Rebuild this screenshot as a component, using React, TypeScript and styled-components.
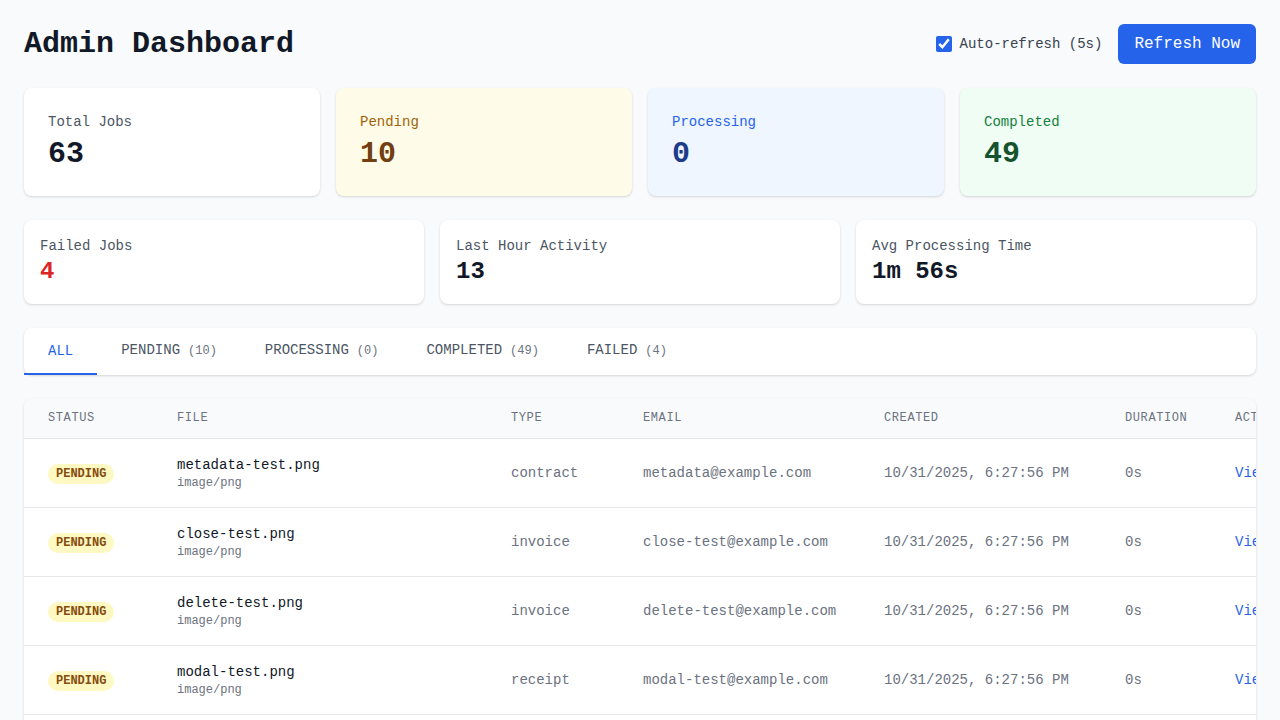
import React, { FC, useState } from 'react'
import styled, { createGlobalStyle } from 'styled-components'

const GlobalStyle = createGlobalStyle`
    body {
        margin: 0;
        background: #f9fafb;
        font-family: "Liberation Mono", "DejaVu Sans Mono", monospace;
        color: #111827;
    }
`

const Page = styled.div`
    padding: 24px;
    display: flex;
    flex-direction: column;
    gap: 24px;
`

const Header = styled.div`
    display: flex;
    align-items: center;
    justify-content: space-between;
`

const Title = styled.h1`
    margin: 0;
    font-size: 30px;
    line-height: 36px;
    font-weight: bold;
    color: #111827;
`

const Controls = styled.div`
    display: flex;
    align-items: center;
    gap: 16px;
`

const AutoLabel = styled.label`
    display: flex;
    align-items: center;
    gap: 8px;
    font-size: 14px;
    color: #374151;
`

const Check = styled.input`
    width: 16px;
    height: 16px;
    margin: 0;
    accent-color: #2563eb;
`

const RefreshButton = styled.button`
    height: 40px;
    padding: 0 16px;
    border: none;
    border-radius: 6px;
    background: #2563eb;
    color: #ffffff;
    font-family: inherit;
    font-size: 16px;
`

const Grid = styled.div<{ $cols: number }>`
    display: grid;
    grid-template-columns: repeat(${(p) => p.$cols}, 1fr);
    gap: 16px;
`

type Tone = 'plain' | 'yellow' | 'blue' | 'green'

const tones: Record<Tone, { bg: string; label: string; value: string }> = {
    plain: { bg: '#ffffff', label: '#4b5563', value: '#111827' },
    yellow: { bg: '#fefce8', label: '#a16207', value: '#713f12' },
    blue: { bg: '#eff6ff', label: '#2563eb', value: '#1e3a8a' },
    green: { bg: '#f0fdf4', label: '#15803d', value: '#14532d' },
}

const Card = styled.div<{ $tone: Tone; $small?: boolean }>`
    background: ${(p) => tones[p.$tone].bg};
    border-radius: 8px;
    box-shadow: 0 1px 3px rgba(0, 0, 0, 0.1), 0 1px 2px rgba(0, 0, 0, 0.06);
    padding: ${(p) => (p.$small ? '16px' : '24px')};
    display: flex;
    flex-direction: column;
    gap: ${(p) => (p.$small ? '0' : '4px')};
`

const CardLabel = styled.span<{ $tone: Tone }>`
    font-size: 14px;
    line-height: 20px;
    color: ${(p) => tones[p.$tone].label};
`

const CardValue = styled.span<{ $color: string; $small?: boolean }>`
    font-size: ${(p) => (p.$small ? '24px' : '30px')};
    line-height: ${(p) => (p.$small ? '32px' : '36px')};
    font-weight: bold;
    color: ${(p) => p.$color};
`

const TabBar = styled.div`
    display: flex;
    background: #ffffff;
    border-radius: 8px;
    box-shadow: 0 1px 3px rgba(0, 0, 0, 0.1), 0 1px 2px rgba(0, 0, 0, 0.06);
`

const Tab = styled.button<{ $active?: boolean }>`
    padding: 12px 24px;
    border: none;
    border-bottom: 2px solid ${(p) => (p.$active ? '#2563eb' : 'transparent')};
    background: none;
    font-family: inherit;
    font-size: 14px;
    line-height: 20px;
    color: ${(p) => (p.$active ? '#2563eb' : '#4b5563')};
`

const Count = styled.span`
    font-size: 12px;
    color: #6b7280;
    margin-left: 8px;
`

const TableCard = styled.div`
    background: #ffffff;
    border-radius: 8px;
    box-shadow: 0 1px 3px rgba(0, 0, 0, 0.1), 0 1px 2px rgba(0, 0, 0, 0.06);
    overflow-x: auto;
`

const Table = styled.table`
    border-collapse: collapse;
    table-layout: fixed;
    width: 1290px;
`

const Th = styled.th<{ $w: number }>`
    width: ${(p) => p.$w - 48}px;
    padding: 12px 24px;
    text-align: left;
    font-size: 12px;
    line-height: 15px;
    font-weight: normal;
    letter-spacing: 0.05em;
    text-transform: uppercase;
    color: #6b7280;
    background: #f9fafb;
    border-bottom: 1px solid #e5e7eb;
    white-space: nowrap;
`

const Td = styled.td`
    padding: 16px 24px;
    font-size: 14px;
    line-height: 20px;
    color: #6b7280;
    border-bottom: 1px solid #e5e7eb;
    white-space: nowrap;
    vertical-align: middle;
    overflow: hidden;
`

const Badge = styled.span`
    display: inline-block;
    padding: 2px 8px;
    border-radius: 9999px;
    background: #fef9c3;
    color: #854d0e;
    font-size: 12px;
    line-height: 16px;
    font-weight: bold;
`

const FileName = styled.div`
    color: #111827;
    font-size: 14px;
    line-height: 20px;
`

const Mime = styled.div`
    color: #6b7280;
    font-size: 12px;
    line-height: 16px;
`

const ViewLink = styled.a`
    color: #2563eb;
    text-decoration: none;
`

const jobs = [
    { file: 'metadata-test.png', type: 'contract', email: 'metadata@example.com' },
    { file: 'close-test.png', type: 'invoice', email: 'close-test@example.com' },
    { file: 'delete-test.png', type: 'invoice', email: 'delete-test@example.com' },
    { file: 'modal-test.png', type: 'receipt', email: 'modal-test@example.com' },
    { file: 'upload-test.png', type: 'receipt', email: 'upload-test@example.com' },
]

const columns: [string, number][] = [
    ['Status', 129],
    ['File', 334],
    ['Type', 132],
    ['Email', 241],
    ['Created', 241],
    ['Duration', 110],
    ['Actions', 103],
]

const tabs: [string, number | null][] = [
    ['ALL', null],
    ['PENDING', 10],
    ['PROCESSING', 0],
    ['COMPLETED', 49],
    ['FAILED', 4],
]

const App: FC = () => {
    const [auto, setAuto] = useState(true)
    return (
        <Page>
            <GlobalStyle />
            <Header>
                <Title>Admin Dashboard</Title>
                <Controls>
                    <AutoLabel>
                        <Check type="checkbox" checked={auto} onChange={() => setAuto(!auto)} />
                        Auto-refresh (5s)
                    </AutoLabel>
                    <RefreshButton>Refresh Now</RefreshButton>
                </Controls>
            </Header>

            <Grid $cols={4}>
                <Card $tone="plain">
                    <CardLabel $tone="plain">Total Jobs</CardLabel>
                    <CardValue $color={tones.plain.value}>63</CardValue>
                </Card>
                <Card $tone="yellow">
                    <CardLabel $tone="yellow">Pending</CardLabel>
                    <CardValue $color={tones.yellow.value}>10</CardValue>
                </Card>
                <Card $tone="blue">
                    <CardLabel $tone="blue">Processing</CardLabel>
                    <CardValue $color={tones.blue.value}>0</CardValue>
                </Card>
                <Card $tone="green">
                    <CardLabel $tone="green">Completed</CardLabel>
                    <CardValue $color={tones.green.value}>49</CardValue>
                </Card>
            </Grid>

            <Grid $cols={3}>
                <Card $tone="plain" $small>
                    <CardLabel $tone="plain">Failed Jobs</CardLabel>
                    <CardValue $color="#dc2626" $small>4</CardValue>
                </Card>
                <Card $tone="plain" $small>
                    <CardLabel $tone="plain">Last Hour Activity</CardLabel>
                    <CardValue $color="#111827" $small>13</CardValue>
                </Card>
                <Card $tone="plain" $small>
                    <CardLabel $tone="plain">Avg Processing Time</CardLabel>
                    <CardValue $color="#111827" $small>1m 56s</CardValue>
                </Card>
            </Grid>

            <TabBar>
                {tabs.map(([name, n], i) => (
                    <Tab key={name} $active={i === 0}>
                        {name}
                        {n !== null && <Count>({n})</Count>}
                    </Tab>
                ))}
            </TabBar>

            <TableCard>
                <Table>
                    <thead>
                        <tr>
                            {columns.map(([c, w]) => (
                                <Th key={c} $w={w}>{c}</Th>
                            ))}
                        </tr>
                    </thead>
                    <tbody>
                        {jobs.map((j) => (
                            <tr key={j.file}>
                                <Td><Badge>PENDING</Badge></Td>
                                <Td>
                                    <FileName>{j.file}</FileName>
                                    <Mime>image/png</Mime>
                                </Td>
                                <Td>{j.type}</Td>
                                <Td>{j.email}</Td>
                                <Td>10/31/2025, 6:27:56 PM</Td>
                                <Td>0s</Td>
                                <Td><ViewLink href="#">View</ViewLink></Td>
                            </tr>
                        ))}
                    </tbody>
                </Table>
            </TableCard>
        </Page>
    )
}

export default App
